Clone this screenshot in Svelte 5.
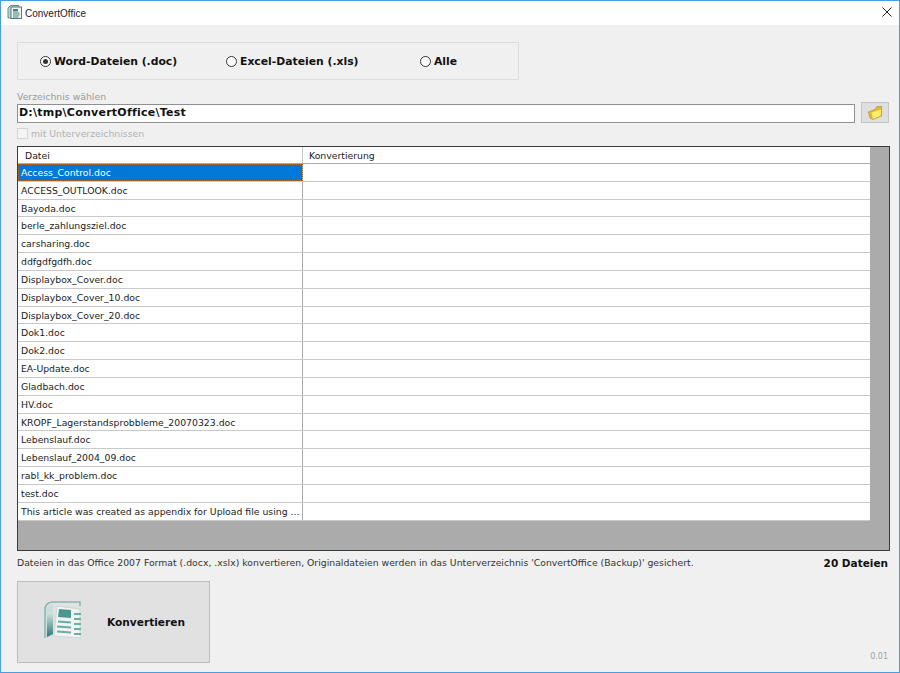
<script>
  const files = ["Access_Control.doc","ACCESS_OUTLOOK.doc","Bayoda.doc","berle_zahlungsziel.doc","carsharing.doc","ddfgdfgdfh.doc","Displaybox_Cover.doc","Displaybox_Cover_10.doc","Displaybox_Cover_20.doc","Dok1.doc","Dok2.doc","EA-Update.doc","Gladbach.doc","HV.doc","KROPF_Lagerstandsprobbleme_20070323.doc","Lebenslauf.doc","Lebenslauf_2004_09.doc","rabl_kk_problem.doc","test.doc","This article was created as appendix for Upload file using ..."];
  const radios = [["Word-Dateien (.doc)", true, "r1"],["Excel-Dateien (.xls)", false, "r2"],["Alle", false, "r3"]];
</script>

<div class="window">
  <header class="titlebar">
    <svg class="appicon" width="16" height="16" viewBox="0 0 16 16">
      <path d="M1 4 L3.5 1.5 H12 V14 H1 Z" fill="#b9d2cf" stroke="#5f9490"/>
      <rect x="4" y="3" width="10.5" height="11.5" fill="#eef4f3" stroke="#47807c"/>
      <rect x="6" y="5" width="5" height="2.5" fill="#3f8580"/>
      <path d="M6 9h6.5M6 11h6.5M6 13h5.5" stroke="#47807c"/>
    </svg>
    <span class="title">ConvertOffice</span>
    <svg class="close" width="10" height="10" viewBox="0 0 10 10"><path d="M0.5 0.5 L9.5 9.5 M9.5 0.5 L0.5 9.5" stroke="#222" stroke-width="1"/></svg>
  </header>

  <main class="content">
    <section class="group">
      {#each radios as [label, on, cls]}
        <div class="radio {cls}"><span class="dot" class:on></span><b>{label}</b></div>
      {/each}
    </section>

    <div class="dirlabel">Verzeichnis wählen</div>
    <div class="pathrow">
      <div class="path">D:\tmp\ConvertOffice\Test</div>
      <div class="browse">
        <svg width="16" height="16" viewBox="0 0 16 16">
          <path d="M1.5 7 L8 4.5 L10 1.5 L14.5 1.5 L14.5 11 L6 14.5 L3 13 Z" fill="#e8b92e" stroke="#a98f3a" stroke-width="0.7"/>
          <path d="M4.5 7.5 L14 4.5 L13.8 10.6 L6 14 Z" fill="#fdec6a"/>
        </svg>
      </div>
    </div>
    <div class="check"><span class="box"></span>mit Unterverzeichnissen</div>

    <section class="table">
      <div class="inner">
        <div class="head">
          <div class="h1">Datei</div>
          <div class="h2">Konvertierung</div>
        </div>
        {#each files as f, i}
          <div class="row" class:sel={i === 0}>
            <div class="c1">{f}</div>
            <div class="c2"></div>
          </div>
        {/each}
      </div>
    </section>

    <div class="status">
      <span>Dateien in das Office 2007 Format (.docx, .xslx) konvertieren, Originaldateien werden in das Unterverzeichnis 'ConvertOffice (Backup)' gesichert.</span>
      <b>20 Dateien</b>
    </div>

    <div class="bottom">
      <div class="convert">
        <svg width="38" height="44" viewBox="0 0 38 44">
          <defs>
            <linearGradient id="pg" x1="0" y1="0" x2="0" y2="1">
              <stop offset="0" stop-color="#d7e6e4"/>
              <stop offset="1" stop-color="#2f7772"/>
            </linearGradient>
          </defs>
          <path d="M1 38 V10 Q1 3 8 2 H36 V6" fill="none" stroke="#86b5b0" stroke-width="1.5"/>
          <path d="M2 38 V12 Q2 5 9 4 V36 Z" fill="#c9dedb"/>
          <path d="M3 37 V14 L9 12 V34 Z" fill="url(#pg)"/>
          <path d="M13 6 L36 9 V38 L10 36 Z" fill="#f0f3f2" stroke="#c9d9d6"/>
          <path d="M15 9 L27 10 V18 L14 17 Z" fill="#4a9792"/>
          <path d="M14 21.5 L27 22.5 M30 14 H37 M30 19 H37 M13 26.5 L27 27.5 M30 24 H37 M13 31.5 L27 32.5 M30 29 H37 M30 34 H37" stroke="#6aaca6" stroke-width="2" fill="none"/>
        </svg>
        <b>Konvertieren</b>
      </div>
      <span class="version">0.01</span>
    </div>
  </main>
</div>

<style>
  :global(body) { margin: 0; background: #f0f0f0; }
  .window {
    box-sizing: border-box;
    width: 900px; height: 673px;
    border: 1px solid #4a9ddf;
    display: flex; flex-direction: column;
    font-family: "DejaVu Sans", sans-serif;
    font-size: 9.3px;
    color: #111;
    overflow: hidden;
  }
  .titlebar {
    height: 24px; flex: none; background: #fff;
    display: flex; align-items: center;
    padding-left: 6px;
  }
  .appicon { margin-top: -2px; }
  .title { margin-left: 2px; font-family: "Liberation Sans", sans-serif; font-size: 10px; color: #222; }
  .close { margin-left: auto; margin-right: 7px; margin-top: -2px; }
  .content { flex: 1; background: #f0f0f0; padding: 17px 10px 0 16px; display: flex; flex-direction: column; min-height: 0; }
  .group {
    box-sizing: border-box; width: 502px; height: 38px; flex: none;
    border: 1px solid #dcdcdc;
    display: flex; align-items: center;
    padding-left: 22px;
    font-size: 10.8px;
  }
  .radio { display: flex; align-items: center; gap: 3px; color: #111; }
  .r1 { width: 186px; } .r2 { width: 194px; }
  .dot {
    box-sizing: border-box; width: 11px; height: 11px; border-radius: 50%;
    border: 1px solid #333; background: #fff;
    display: flex; align-items: center; justify-content: center;
  }
  .dot.on::after { content: ""; width: 5px; height: 5px; border-radius: 50%; background: #333; }
  .dirlabel { margin-top: 10px; height: 14px; line-height: 13px; color: #9a9a9a; }
  .pathrow { display: flex; align-items: flex-end; height: 19px; }
  .path {
    box-sizing: border-box; width: 839px; height: 19px;
    background: #fff; border: 1px solid #8f8f8f;
    font-weight: bold; font-size: 11px; letter-spacing: 0.24px; line-height: 16px; padding-left: 1px; color: #111;
  }
  .browse {
    box-sizing: border-box; width: 28px; height: 21px; margin-left: 6px;
    background: #dfdfdf; border: 1px solid #c4c4c4;
    display: flex; align-items: center; justify-content: center;
  }
  .check { display: flex; align-items: center; height: 11px; margin-top: 5px; color: #b2b2b2; gap: 3px; }
  .box { box-sizing: border-box; width: 11px; height: 11px; background: #f5f5f5; border: 1px solid #d5d5d5; }
  .table {
    box-sizing: border-box; width: 873px; height: 405px; margin-top: 7px;
    background: #ababab; border: 1px solid #3a3a3a; flex: none;
  }
  .inner { width: 852px; }
  .head { display: flex; height: 17px; background: #fff; border-bottom: 1px solid #ababab; line-height: 18px; color: #222; box-sizing: border-box; }
  .h1 { box-sizing: border-box; width: 285px; padding-left: 7px; border-right: 1px solid #c8c8c8; }
  .h2 { padding-left: 6px; }
  .row { display: flex; height: 17.84px; box-sizing: border-box; background: #fff; border-bottom: 1px solid #c9c9c9; line-height: 17px; }
  .c1 { box-sizing: border-box; width: 285px; padding-left: 3px; border-right: 1px solid #a8a8a8; white-space: nowrap; overflow: hidden; color: #222; }
  .row.sel .c1 { background: #0078d7; color: #fff; outline: 1px dotted #b06a2a; outline-offset: -1px; }
  .status { display: flex; justify-content: space-between; align-items: flex-start; margin-top: 5px; height: 24px; color: #333; line-height: 14px; }
  .status b { font-size: 10.5px; color: #111; margin-right: 1px; }
  .bottom { display: flex; justify-content: space-between; align-items: flex-end; flex: 1; padding-bottom: 11px; }
  .convert {
    box-sizing: border-box; width: 193px; height: 82px;
    background: #e1e1e1; border: 1px solid #bcbcbc;
    display: flex; align-items: center; padding-left: 26px; margin-bottom: -2px;
    font-size: 10.6px; color: #111;
  }
  .convert b { margin-left: 25px; }
  .version { font-size: 8px; color: #a0a0a0; margin-right: 1px; }
</style>
